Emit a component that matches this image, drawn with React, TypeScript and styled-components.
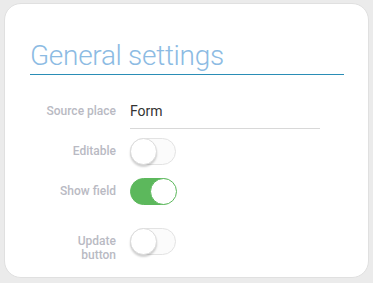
import React, { useState } from "react";
import styled, { createGlobalStyle } from "styled-components";

const GlobalStyle = createGlobalStyle`
  html, body {
    margin: 0;
    padding: 0;
    background: #ebebeb;
    font-family: Roboto, "Liberation Sans", sans-serif;
  }
`;

const Page = styled.div`
  padding: 3px 0 0 4px;
`;

const Card = styled.div`
  box-sizing: border-box;
  width: 365px;
  height: 275px;
  background: #fff;
  border: 1px solid #e0e0e0;
  border-radius: 17px;
  padding: 35px 0 0 25px;
`;

const Title = styled.h2`
  margin: 0;
  width: 314px;
  font-size: 28px;
  line-height: 33px;
  font-weight: 300;
  letter-spacing: -0.3px;
  color: #8cbbe3;
  padding-bottom: 2px;
  border-bottom: 1px solid #2a8db6;
`;

const Form = styled.div`
  display: flex;
  flex-direction: column;
  margin-top: 23px;
`;

const Row = styled.div<{ $space: number }>`
  display: flex;
  align-items: flex-start;
  gap: 14px;
  margin-top: ${p => p.$space}px;
`;

const Label = styled.div`
  width: 86px;
  margin-top: 6px;
  text-align: right;
  font-size: 12px;
  line-height: 14px;
  font-weight: 500;
  color: #b9bac3;
`;

const Value = styled.div`
  box-sizing: border-box;
  width: 190px;
  height: 31px;
  padding-top: 5px;
  font-size: 14px;
  line-height: 17px;
  color: #333;
  border-bottom: 1px solid #d8d8d8;
`;

const Track = styled.button<{ $on: boolean }>`
  position: relative;
  box-sizing: border-box;
  width: 46px;
  height: 27px;
  padding: 0;
  border-radius: 14px;
  cursor: pointer;
  border: 1px solid ${p => (p.$on ? "#5cb85c" : "#e3e3e3")};
  background: ${p => (p.$on ? "#5cb85c" : "#fbfbfb")};
`;

const Knob = styled.span<{ $on: boolean }>`
  position: absolute;
  top: -1px;
  left: ${p => (p.$on ? "19px" : "-1px")};
  box-sizing: border-box;
  width: 27px;
  height: 27px;
  border-radius: 50%;
  background: #fff;
  border: 1px solid ${p => (p.$on ? "#5cb85c" : "#dcdcdc")};
  box-shadow: ${p => (p.$on ? "none" : "0 2px 2px rgba(0,0,0,0.18)")};
`;

const Toggle = ({ initial }: { initial: boolean }) => {
  const [on, setOn] = useState(initial);
  return (
    <Track $on={on} onClick={() => setOn(!on)}>
      <Knob $on={on} />
    </Track>
  );
};

const App = () => {
  return (
    <Page>
      <GlobalStyle />
      <Card>
        <Title>General settings</Title>
        <Form>
          <Row $space={0}>
            <Label>Source place</Label>
            <Value>Form</Value>
          </Row>
          <Row $space={9}>
            <Label>Editable</Label>
            <Toggle initial={false} />
          </Row>
          <Row $space={13}>
            <Label>Show field</Label>
            <Toggle initial={true} />
          </Row>
          <Row $space={23}>
            <Label>
              Update
              <br />
              button
            </Label>
            <Toggle initial={false} />
          </Row>
        </Form>
      </Card>
    </Page>
  );
};

export default App;
